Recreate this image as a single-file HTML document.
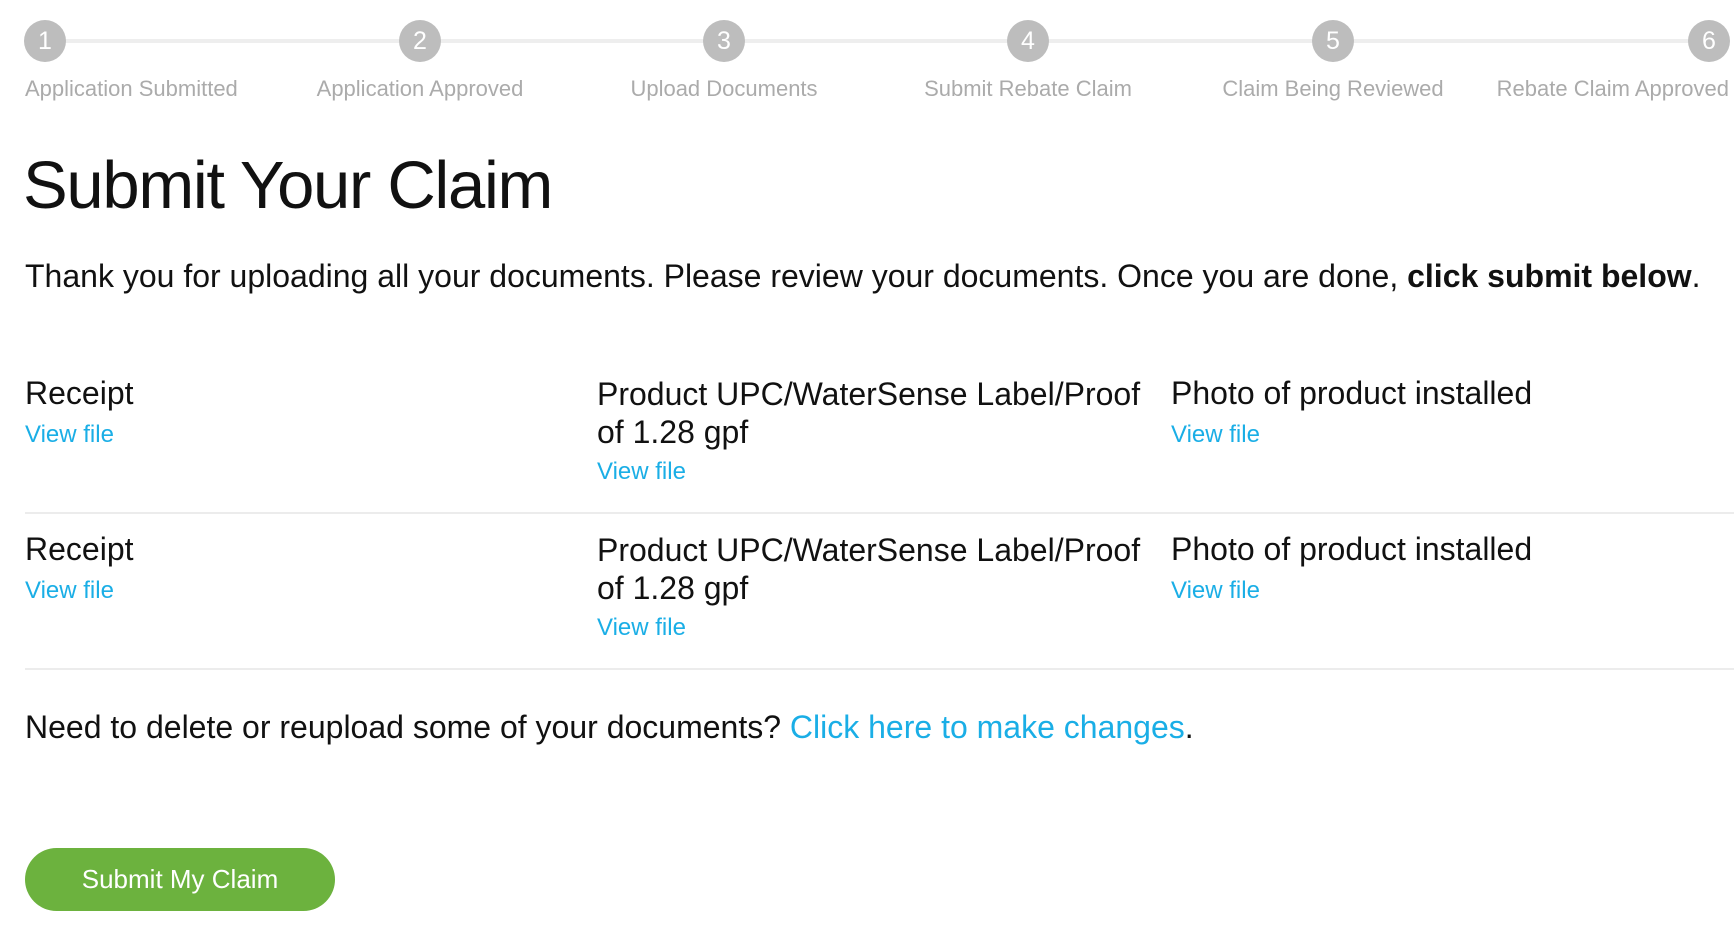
<!DOCTYPE html>
<html><head><meta charset="utf-8"><style>
body{margin:0;width:1734px;height:936px;background:#fff;font-family:"Liberation Sans",Arial,sans-serif;color:#111;position:relative;overflow:hidden}
.a{position:absolute;white-space:nowrap}
.line{position:absolute;left:45px;width:1664px;top:39px;height:4px;background:#eeeeee}
.c{position:absolute;width:42px;height:42px;border-radius:50%;background:#bdbdbd;color:#fff;font-size:25px;line-height:42px;text-align:center;top:20px}
.l{position:absolute;top:76px;font-size:22px;color:#ababab;white-space:nowrap;transform:translateX(-50%)}
.t{font-size:32px}
.v{font-size:24px;color:#1aaee6}
.hr{position:absolute;left:25px;right:0;height:2px;background:#ececec}
</style></head><body>
<div class="line"></div>
<div class="c" style="left:24px">1</div>
<div class="c" style="left:399px">2</div>
<div class="c" style="left:703px">3</div>
<div class="c" style="left:1007px">4</div>
<div class="c" style="left:1312px">5</div>
<div class="c" style="left:1688px">6</div>
<div class="l" style="left:25px;transform:none">Application Submitted</div>
<div class="l" style="left:420px">Application Approved</div>
<div class="l" style="left:724px">Upload Documents</div>
<div class="l" style="left:1028px">Submit Rebate Claim</div>
<div class="l" style="left:1333px">Claim Being Reviewed</div>
<div class="l" style="right:5px;transform:none">Rebate Claim Approved</div>

<div class="a" style="left:23px;top:147px;font-size:67px;letter-spacing:-1.3px">Submit Your Claim</div>
<div class="a" style="left:25px;top:258px;font-size:32px">Thank you for uploading all your documents. Please review your documents. Once you are done, <b>click submit below</b>.</div>

<div class="a t" style="left:25px;top:375px">Receipt</div>
<div class="a v" style="left:25px;top:421px">View file</div>
<div class="a t" style="left:597px;top:375px;line-height:38px;white-space:normal;width:560px">Product UPC/WaterSense Label/Proof<br>of 1.28 gpf</div>
<div class="a v" style="left:597px;top:458px">View file</div>
<div class="a t" style="left:1171px;top:375px">Photo of product installed</div>
<div class="a v" style="left:1171px;top:421px">View file</div>
<div class="hr" style="top:512px"></div>

<div class="a t" style="left:25px;top:531px">Receipt</div>
<div class="a v" style="left:25px;top:577px">View file</div>
<div class="a t" style="left:597px;top:531px;line-height:38px;white-space:normal;width:560px">Product UPC/WaterSense Label/Proof<br>of 1.28 gpf</div>
<div class="a v" style="left:597px;top:614px">View file</div>
<div class="a t" style="left:1171px;top:531px">Photo of product installed</div>
<div class="a v" style="left:1171px;top:577px">View file</div>
<div class="hr" style="top:668px"></div>

<div class="a" style="left:25px;top:709px;font-size:32px">Need to delete or reupload some of your documents? <span style="color:#1aaee6">Click here to make changes</span>.</div>

<div class="a" style="left:25px;top:848px;width:310px;height:63px;border-radius:32px;background:#6cb23e;color:#fff;font-size:26px;line-height:63px;text-align:center">Submit My Claim</div>
</body></html>
